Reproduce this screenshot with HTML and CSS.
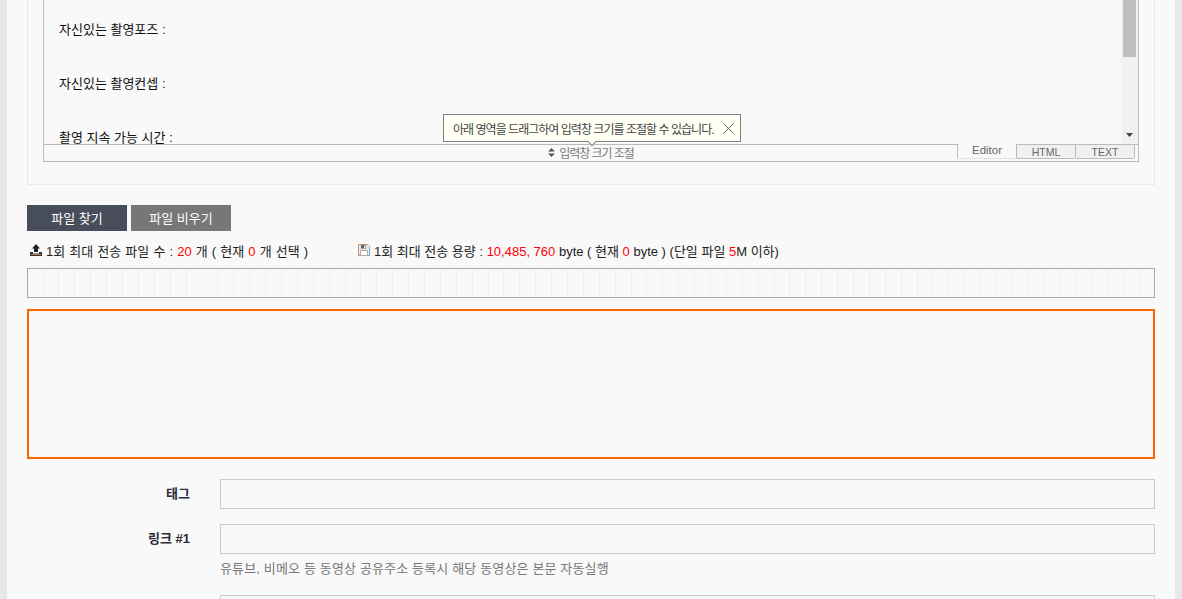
FILE: index.html
```html
<!DOCTYPE html>
<html lang="ko">
<head>
<meta charset="utf-8">
<title>글쓰기</title>
<link rel="stylesheet" href="styles.css">
</head>
<body>
<main class="page">
  <section class="panel">
    <div class="editor">
      <div class="edit-area">
        <div class="edit-text">
          <p>자신있는 촬영포즈 :</p>
          <p>자신있는 촬영컨셉 :</p>
          <p>촬영 지속 가능 시간 :</p>
        </div>
        <div class="scrollbar">
          <div class="thumb"></div>
          <svg class="scroll-arrow" width="7" height="4" viewBox="0 0 7 4"><path d="M0 0h7L3.500 4z" fill="#444"/></svg>
        </div>
        <div class="tip">
          <span>아래 영역을 드래그하여 입력창 크기를 조절할 수 있습니다.</span>
          <svg class="tip-close" width="11" height="11" viewBox="0 0 11 11"><path d="M.5.5l10 10M10.500.5l-10 10" stroke="#666" fill="none"/></svg>
          <i class="tip-arrow"></i>
        </div>
      </div>
      <div class="resize-bar">
        <div class="resize-label">
          <svg width="7" height="9" viewBox="0 0 7 9"><path d="M3.500 0L7 3.500H0zM3.500 9L0 5.500h7z" fill="#555"/></svg>
          <span>입력창 크기 조절</span>
        </div>
        <div class="tabs">
          <span class="tab active">Editor</span>
          <span class="tab">HTML</span>
          <span class="tab">TEXT</span>
        </div>
      </div>
    </div>
  </section>

  <div class="file-buttons">
    <button class="btn btn-dark">파일 찾기</button>
    <button class="btn btn-gray">파일 비우기</button>
  </div>

  <div class="file-info">
    <div class="info-item info-count">
      <svg width="12" height="12" viewBox="0 0 12 12"><path d="M6 0L10 4.500H8V8H4V4.500H2z" fill="#222"/><path d="M0 8h3v1.500h6V8h3v4H0z" fill="#333"/><path d="M1 10h10v1H1z" fill="#b9793f"/></svg>
      <span>1회 최대 전송 파일 수 : <b class="red">20</b> 개 ( 현재 <b class="red">0</b> 개 선택 )</span>
    </div>
    <div class="info-item">
      <svg width="12" height="12" viewBox="0 0 12 12"><path d="M.5 11.500V.5h9" fill="none" stroke="#c98f6c"/><path d="M9.500.5l2 2v9H.5" fill="none" stroke="#7f9cc4"/><path d="M1 1h9.500v10H1z" fill="#e9e6e8"/><path d="M3 1h5v3.500H3z" fill="#5f6470"/><path d="M6 1.500h1.500v2.500H6z" fill="#e8e8e8"/><path d="M2.500 6.500h7v5h-7z" fill="#fff" stroke="#b9a5a5"/></svg>
      <span>1회 최대 전송 용량 : <b class="red">10,485, 760</b> byte ( 현재 <b class="red">0</b> byte ) (단일 파일 <b class="red">5</b>M 이하)</span>
    </div>
  </div>

  <div class="file-stripes"></div>
  <div class="drop-box"></div>

  <div class="field">
    <label class="field-label">태그</label>
    <div class="field-body"><input class="field-input" type="text"></div>
  </div>
  <div class="field">
    <label class="field-label">링크 #1</label>
    <div class="field-body">
      <input class="field-input" type="text">
      <p class="help">유튜브, 비메오 등 동영상 공유주소 등록시 해당 동영상은 본문 자동실행</p>
    </div>
  </div>
  <div class="field">
    <span class="field-label"></span>
    <div class="field-body"><input class="field-input" type="text"></div>
  </div>
</main>
</body>
</html>
```

FILE: styles.css
```css
* { box-sizing: border-box; }
html, body { margin: 0; height: 599px; overflow: hidden; }
body {
  background: #e8e8e8;
  font-family: "Liberation Sans", "Noto Sans CJK KR", sans-serif;
  font-size: 13px;
  color: #222;
}
.page {
  margin: 0 7px;
  height: 599px;
  padding: 0 20px;
  background: #f9f9f9;
  overflow: hidden;
}
.panel {
  height: 185px;
  padding: 0 15px;
  border: 1px solid #e9e9e9;
  border-top: 0;
}
.editor {
  height: 162px;
  border: 1px solid #bbb;
  border-top: 0;
}
.edit-area {
  position: relative;
  display: flex;
  height: 145px;
  border-bottom: 1px solid #bbb;
}
.edit-text {
  flex: 1;
  height: 144px;
  padding: 21px 15px 0;
  overflow: hidden;
  color: #111;
}
.edit-text p { margin: 0 0 36px; line-height: 18px; }
.scrollbar {
  position: relative;
  width: 17px;
  height: 144px;
  background: #f1f1f1;
  padding: 0 2px;
}
.thumb { height: 57px; background: #bfbfbf; }
.scroll-arrow { position: absolute; left: 5px; top: 133px; }
.tip {
  position: absolute;
  left: 399px;
  top: 114px;
  display: flex;
  align-items: center;
  justify-content: space-between;
  width: 298px;
  height: 28px;
  padding: 0 6px 0 9px;
  background: #fffff4;
  border: 1px solid #808080;
  font-size: 12px;
  letter-spacing: -0.97px;
  color: #444;
  white-space: nowrap;
}
.tip-close { flex: none; }
.tip-arrow {
  position: absolute;
  left: 145px;
  bottom: -4px;
  width: 6px;
  height: 6px;
  background: #fffff4;
  border-right: 1px solid #808080;
  border-bottom: 1px solid #808080;
  transform: rotate(45deg);
}
.resize-bar {
  position: relative;
  height: 16px;
  display: flex;
  justify-content: center;
}
.resize-label {
  display: flex;
  align-items: center;
  gap: 4px;
  padding-bottom: 2px;
  font-size: 12px;
  letter-spacing: -1.05px;
  color: #777;
}
.tabs {
  position: absolute;
  right: 3px;
  top: -1px;
  display: flex;
  height: 16px;
}
.tab {
  width: 59px;
  height: 15px;
  display: flex;
  align-items: center;
  justify-content: center;
  border: 1px solid #bbb;
  border-right: 0;
  border-radius: 0 0 2px 2px;
  background: #f0f0f0;
  font-size: 10.5px;
  color: #666;
}
.tab:last-child { width: 60px; border-right: 1px solid #bbb; }
.tab.active {
  height: 15px;
  padding-bottom: 2px;
  border-top: 0;
  border-bottom: 1px dotted #ccc;
  background: #f9f9f9;
  font-size: 11.5px;
}
.file-buttons {
  display: flex;
  gap: 4px;
  margin-top: 20px;
}
.btn {
  width: 100px;
  height: 26px;
  padding: 0 0 2px;
  border: 0;
  color: #fff;
  font: 13px "Liberation Sans", "Noto Sans CJK KR", sans-serif;
}
.btn-dark { background: #474d5a; }
.btn-gray { background: #777; }
.file-info {
  display: flex;
  align-items: center;
  height: 18px;
  margin-top: 10px;
  padding-left: 3px;
  color: #222;
}
.info-item { display: flex; align-items: center; gap: 4px; white-space: nowrap; }
.info-count { width: 328px; word-spacing: 0.5px; }
.red { color: #f00; font-weight: normal; }
.file-stripes {
  height: 30px;
  margin-top: 9px;
  border: 1px solid #aaa;
  background: repeating-linear-gradient(90deg, #f9f9f9 0 14.6px, #f0f0f0 14.6px 15.6px, #f9f9f9 15.6px 15.89px);
}
.drop-box {
  height: 150px;
  margin-top: 11px;
  border: 2px solid #f60;
}
.field {
  display: flex;
  margin-top: 20px;
}
.field + .field { margin-top: 15px; }
.field-label {
  width: 163px;
  flex: none;
  text-align: right;
  font-weight: bold;
  line-height: 29px;
  color: #2b2b35;
}
.field-body {
  flex: 1;
  margin-left: 30px;
}
.field-input {
  display: block;
  width: 100%;
  height: 30px;
  background: #f9f9f9;
  border: 1px solid #ccc;
  outline: 0;
}
.help {
  margin: 6px 0 0;
  line-height: 17px;
  letter-spacing: 0.15px;
  color: #777;
}
.field + .field + .field { margin-top: 18px; }
```
